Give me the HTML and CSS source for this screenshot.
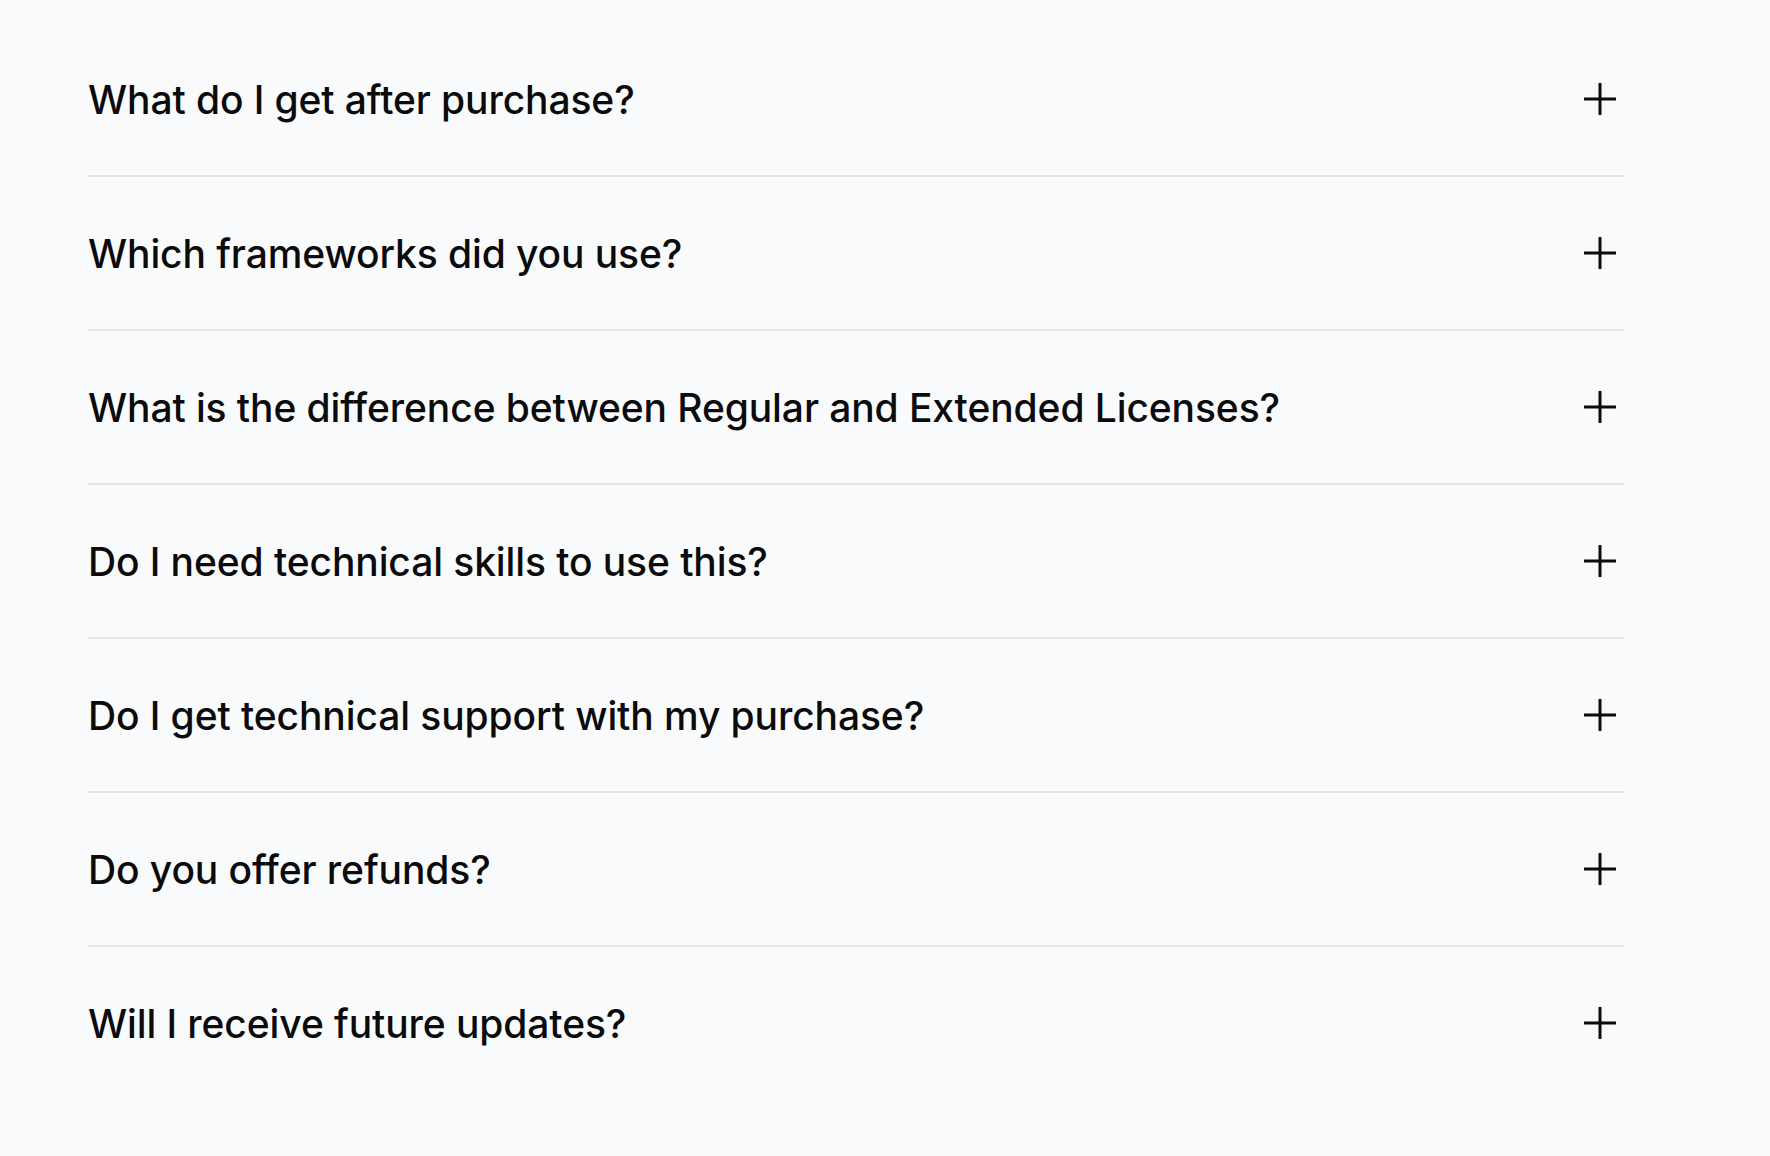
FILE: index.html
```html
<!DOCTYPE html>
<html lang="en">
<head>
  <meta charset="UTF-8">
  <title>FAQ</title>
  <link rel="stylesheet" href="styles.css">
</head>
<body>
  <div class="faq">
    <div class="faq-item">
      <span class="faq-question">What do I get after purchase?</span>
      <svg class="faq-icon" viewBox="0 0 32 32"><path d="M16 0v32M0 16h32"/></svg>
    </div>
    <div class="faq-item">
      <span class="faq-question">Which frameworks did you use?</span>
      <svg class="faq-icon" viewBox="0 0 32 32"><path d="M16 0v32M0 16h32"/></svg>
    </div>
    <div class="faq-item">
      <span class="faq-question">What is the difference between Regular and Extended Licenses?</span>
      <svg class="faq-icon" viewBox="0 0 32 32"><path d="M16 0v32M0 16h32"/></svg>
    </div>
    <div class="faq-item">
      <span class="faq-question">Do I need technical skills to use this?</span>
      <svg class="faq-icon" viewBox="0 0 32 32"><path d="M16 0v32M0 16h32"/></svg>
    </div>
    <div class="faq-item">
      <span class="faq-question">Do I get technical support with my purchase?</span>
      <svg class="faq-icon" viewBox="0 0 32 32"><path d="M16 0v32M0 16h32"/></svg>
    </div>
    <div class="faq-item">
      <span class="faq-question">Do you offer refunds?</span>
      <svg class="faq-icon" viewBox="0 0 32 32"><path d="M16 0v32M0 16h32"/></svg>
    </div>
    <div class="faq-item">
      <span class="faq-question">Will I receive future updates?</span>
      <svg class="faq-icon" viewBox="0 0 32 32"><path d="M16 0v32M0 16h32"/></svg>
    </div>
  </div>
</body>
</html>
```

FILE: styles.css
```css
body {
  margin: 0;
  background-color: #f9fafb;
  font-family: Inter, "Noto Sans", sans-serif;
  color: #0b0b0c;
}
.faq {
  width: 1536px;
  padding: 23px 0 0 88px;
}
.faq-item {
  height: 152px;
  display: flex;
  align-items: center;
  justify-content: space-between;
  padding-right: 8px;
  border-bottom: 2px solid #e2e3e6;
}
.faq-item:last-child {
  border-bottom: none;
}
.faq-question {
  font-size: 39px;
  font-weight: 500;
  letter-spacing: -0.1px;
}
.faq-icon {
  width: 32px;
  height: 32px;
  stroke: #0b0b0c;
  stroke-width: 3;
  fill: none;
}
```
